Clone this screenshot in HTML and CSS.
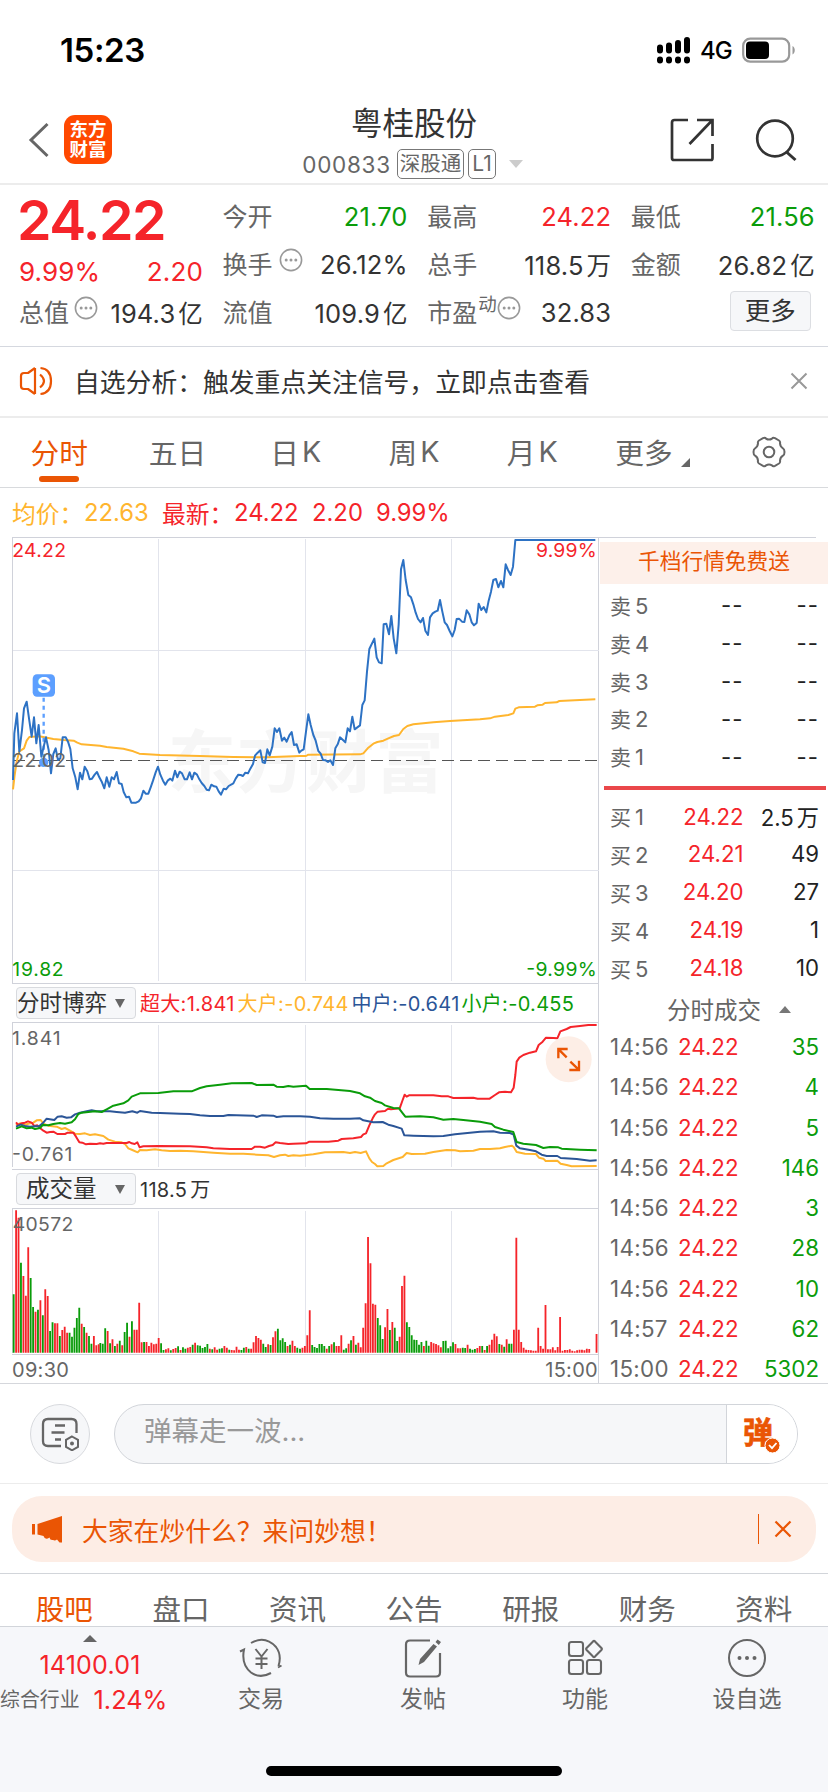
FILE: index.html
```html
<!DOCTYPE html>
<html lang="zh-CN">
<head>
<meta charset="utf-8">
<title>粤桂股份 000833</title>
<link rel="stylesheet" href="styles.css">
</head>
<body>
<svg width="0" height="0" class="defs">
  <symbol id="dots" viewBox="0 0 24 24"><circle cx="12" cy="12" r="10.6" fill="none" stroke="#999" stroke-width="1.6"/><circle cx="7.2" cy="12" r="1.5" fill="#999"/><circle cx="12" cy="12" r="1.5" fill="#999"/><circle cx="16.8" cy="12" r="1.5" fill="#999"/></symbol>
</svg>
<div class="status">
  <span class="clock">15:23</span>
  <svg class="signal" width="36" height="28" viewBox="0 0 36 28">
    <g stroke="#000" stroke-width="6" stroke-linecap="round"><path d="M4 11.5v3M13 9.5v5M22 7v7.500M31 4v10.500M4 23.500v1M13 23.500v1M22 23.500v1M31 23.500v1"/></g>
  </svg>
  <span class="net">4G</span>
  <svg class="battery" width="54" height="27" viewBox="0 0 54 27"><rect x="1.200" y="1.700" width="46" height="23" rx="7" fill="none" stroke="#999" stroke-width="2.200"/><rect x="4" y="4.500" width="23" height="17.500" rx="4" fill="#000"/><path d="M50.500 9c3 1.500 3 7 0 8.500z" fill="#999"/></svg>
</div>
<header class="head">
  <div class="head-left">
    <svg width="22" height="36" viewBox="0 0 22 36"><path d="M19.500 2 3 18l16.500 16" fill="none" stroke="#666" stroke-width="3"/></svg>
    <div class="logo"><span>东方</span><span>财富</span></div>
  </div>
  <div class="head-mid">
    <div class="name">粤桂股份</div>
    <div class="code"><span class="code-num">000833</span><span class="tag">深股通</span><span class="tag tag-l">L1</span><i class="caret"></i></div>
  </div>
  <div class="head-right">
    <svg width="44" height="44" viewBox="0 0 44 44"><path d="M18 2H4.500Q2 2 2 4.500V40q0 2 2 2h37q1.500 0 1.500-2V26M27 2h15.500v16M42 2.500 19.500 26" fill="none" stroke="#333" stroke-width="2.700"/></svg>
    <svg width="44" height="44" viewBox="0 0 44 44"><circle cx="20" cy="20.500" r="17.800" fill="none" stroke="#333" stroke-width="2.700"/><path d="m31.500 34 9 8" stroke="#333" stroke-width="3"/></svg>
  </div>
</header>
<section class="quote">
  <div class="col first">
    <div class="price">24.22</div>
    <div class="row red chg"><span>9.99%</span><span>2.20</span></div>
    <div class="row"><label>总值<svg class="tip"><use href="#dots"/></svg></label><span>194.3<u>亿</u></span></div>
  </div>
  <div class="col">
    <div class="row"><label>今开</label><span class="green">21.70</span></div>
    <div class="row"><label>换手<svg class="tip gap"><use href="#dots"/></svg></label><span>26.12%</span></div>
    <div class="row"><label>流值</label><span>109.9<u>亿</u></span></div>
  </div>
  <div class="col">
    <div class="row"><label>最高</label><span class="red">24.22</span></div>
    <div class="row"><label>总手</label><span>118.5<u>万</u></span></div>
    <div class="row"><label>市盈<sup>动</sup><svg class="tip tight"><use href="#dots"/></svg></label><span>32.83</span></div>
  </div>
  <div class="col">
    <div class="row"><label>最低</label><span class="green">21.56</span></div>
    <div class="row"><label>金额</label><span>26.82<u>亿</u></span></div>
    <div class="row end"><b class="more">更多</b></div>
  </div>
</section>
<section class="notice">
  <svg width="36" height="32" viewBox="0 0 36 32"><path d="M16 3v26M16 3 9 8H5Q2 8 2 11v10q0 3 3 3h4l7 5" fill="none" stroke="#ea5504" stroke-width="2.200" stroke-linejoin="round"/><path d="M21 9.500q8 6.500 0 13M21.500 3q10.500 1 10.500 13t-10.500 13" fill="none" stroke="#ea5504" stroke-width="2.200"/></svg>
  <p>自选分析：触发重点关注信号，立即点击查看</p>
  <svg width="18" height="18" viewBox="0 0 18 18"><path d="m1.500 1.500 15 15m0-15-15 15" stroke="#999" stroke-width="2"/></svg>
</section>
<nav class="tabs">
  <span class="on">分时</span><span>五日</span><span>日<i>K</i></span><span>周<i>K</i></span><span>月<i>K</i></span><span class="t-more">更多<svg width="9" height="9"><path d="M9 0v9H0z" fill="#666"/></svg></span>
  <span><svg width="34" height="32" viewBox="0 0 34 32"><path d="M11 2.200q2-1 3 .4 3 2 6 0 1-1.400 3-.4l4 2.300q1.500 1 1 2.800.2 3.500 3 5Q32.500 13 32.500 16t-1.500 3.700q-2.800 1.500-3 5 .5 1.800-1 2.800l-4 2.300q-2 1-3-.4-3-2-6 0-1 1.400-3 .4l-4-2.300q-1.500-1-1-2.800-.2-3.500-3-5Q1.500 19 1.500 16T3 12.300q2.800-1.500 3-5-.5-1.800 1-2.800z" fill="none" stroke="#666" stroke-width="2"/><circle cx="17" cy="16" r="5.300" fill="none" stroke="#666" stroke-width="2"/></svg></span>
</nav>
<div class="avg"><span class="amber a1">均价：</span><span class="amber a2">22.63</span><span class="red a3">最新：</span><span class="red a4">24.22</span><span class="red a5">2.20</span><span class="red">9.99%</span></div>
<main class="board">
  <div class="charts">
    <svg class="c-price" width="587" height="447" viewBox="36 21 1761 1341">
      <text class="mark" x="503" y="772" textLength="828">东方财富</text>
      <path class="grid" d="M475.500 27V1353M916.500 27V1353M1354.500 27V1353M38 361H1797M38 1021H1797"/>
      <path class="frame" d="M37.500 22V1360.500H1797"/>
      <path class="mid" d="M38 691.500H1797" stroke="#555" stroke-width="3" stroke-dasharray="36 17.700"/>
      <polyline class="ln" stroke="#ffb52e" points="39,778 44,735 50,695 58,664 72,655 80,632 88,621 118,619 160,627 192,630 221,632 232,638 245,643 300,647 320,651 370,656 400,664 418,671 480,675 600,678 700,681 800,682 900,678 918,678 925,674 1080,673 1090,670 1105,653 1120,641 1132,636 1150,632 1165,625 1182,618 1197,615 1210,597 1222,588 1240,583 1300,577 1350,573 1440,568 1470,565 1485,560 1525,555 1540,550 1546,536 1556,532 1605,530 1612,526 1628,524 1635,519 1670,517 1678,513 1786,508"/>
      <path d="M131 503V690" stroke="#5c9fff" stroke-width="7" stroke-dasharray="12 12"/><circle cx="131" cy="697" r="14" fill="#5c9fff"/>
      <polyline class="ln" stroke="#2d72c4" points="39,750 43,610 51,550 58,665 66,600 72,535 80,515 87,565 95,620 102,562 109,640 116,585 124,680 131,650 138,622 146,660 153,730 160,672 167,655 174,690 181,685 188,622 197,622 204,635 211,657 218,715 226,742 233,778 240,728 247,748 254,710 262,724 269,748 276,746 284,734 291,726 298,742 306,757 313,775 320,742 328,770 335,742 342,748 350,726 357,760 365,762 371,786 379,802 387,800 394,818 408,818 416,814 423,805 430,782 437,791 445,791 452,772 459,752 467,727 474,710 481,734 489,752 496,764 503,752 511,746 517,752 525,722 532,742 539,725 546,730 554,748 561,748 569,727 576,748 583,728 591,734 598,748 605,759 613,768 620,779 627,781 634,764 642,769 649,770 656,784 663,794 671,776 678,778 686,768 700,760 707,746 715,734 722,735 729,738 736,728 744,730 751,716 759,702 765,677 773,668 781,661 788,697 795,699 802,658 809,676 817,650 824,595 831,606 838,595 846,632 853,623 860,635 868,616 875,606 882,645 890,643 898,668 904,662 911,658 918,605 925,553 932,585 940,615 947,632 955,663 962,671 969,690 977,691 984,696 991,691 999,705 1006,655 1013,643 1020,622 1036,637 1043,595 1050,604 1057,560 1064,598 1072,592 1080,586 1087,525 1094,511 1101,425 1108,357 1123,326 1130,382 1137,397 1145,400 1151,283 1159,281 1167,313 1174,258 1181,325 1189,370 1196,283 1203,118 1210,90 1217,150 1225,195 1233,202 1240,223 1247,248 1254,267 1262,277 1269,264 1276,302 1284,315 1290,262 1298,250 1306,245 1313,242 1320,210 1327,245 1334,277 1341,285 1349,303 1357,319 1364,300 1370,267 1377,266 1386,275 1393,276 1400,241 1408,253 1415,277 1422,286 1430,279 1436,221 1444,240 1451,231 1459,247 1466,212 1473,185 1480,150 1488,147 1495,172 1503,153 1510,172 1517,103 1524,120 1532,135 1539,110 1546,30 1786,30"/>
      <rect x="98" y="433" width="67" height="67" rx="13" fill="#5c9fff"/><text x="131.500" y="490" class="s">S</text>
      <text class="ax" x="37" y="81" textLength="161" fill="#f5242a">24.22</text>
      <text class="ax" x="37" y="711" textLength="161" fill="#666">22.02</text>
      <text class="ax" x="37" y="1338" textLength="154" fill="#0a9c0a">19.82</text>
      <text class="ax" x="1608" y="81" textLength="182" fill="#f5242a">9.99%</text>
      <text class="ax" x="1579" y="1338" textLength="211" fill="#0a9c0a">-9.99%</text>
    </svg>
    <div class="bar">
      <div class="pick"><span>分时博弈</span><svg width="10" height="9"><path d="M0 0h10L5 9z" fill="#666"/></svg></div>
      <span class="lg red l1">超大:1.841</span><span class="lg amber l2">大户:-0.744</span><span class="lg navy l3">中户:-0.641</span><span class="lg green">小户:-0.455</span>
    </div>
    <div class="flow">
    <svg width="587" height="148" viewBox="36 126 1761 444">
      <path class="grid" d="M475.500 135V560M916.500 135V560M1354.500 135V560"/>
      <path class="frame" d="M1797 127.500H37.500V560M36 568.500H1797"/>
      <polyline class="ln" stroke="#ffb52e" points="48,435 60,430 75,434 90,430 100,428 110,421 122,420 130,431 145,437 170,440 185,447 195,444 210,452 225,461 240,462 255,460 270,465 285,463 310,468 325,479 345,485 365,487 375,492 385,505 397,510 413,517 420,510 440,511 465,508 485,511 510,513 540,512 580,514 610,516 640,518 690,521 730,521 770,524 805,526 822,531 840,526 855,524 865,528 880,526 900,527 940,523 975,517 1030,516 1050,519 1065,516 1082,519 1098,514 1108,535 1116,546 1125,552 1132,559 1150,558 1160,550 1180,540 1208,531 1220,519 1235,522 1275,521 1300,516 1340,510 1365,511 1380,514 1420,512 1440,507 1470,507 1500,505 1515,501 1535,497 1541,501 1550,516 1575,521 1608,522 1617,533 1630,536 1637,543 1672,542 1682,551 1700,555 1715,559 1790,558"/>
      <polyline class="ln" stroke="#f5242a" points="48,427 55,435 65,430 75,428 84,424 95,428 103,438 112,436 120,444 130,452 140,458 150,456 160,455 172,462 195,462 203,458 220,458 228,470 238,487 247,488 258,493 270,491 290,492 300,490 310,491 320,489 380,489 388,486 395,490 404,492 412,487 419,502 430,499 475,498 570,499 620,502 640,505 690,507 755,507 765,500 780,500 795,503 807,498 818,495 827,487 840,489 865,492 880,491 918,490 928,485 985,485 1015,482 1025,477 1060,475 1083,471 1090,463 1098,460 1108,436 1118,415 1125,403 1133,395 1155,393 1164,386 1173,388 1199,385 1208,360 1214,344 1220,350 1227,346 1300,346 1325,349 1345,349 1360,354 1420,353 1433,356 1469,356 1485,345 1497,337 1515,335 1533,337 1541,323 1546,285 1550,245 1558,233 1570,225 1590,218 1608,214 1616,195 1628,185 1638,173 1660,174 1672,175 1681,154 1700,147 1712,141 1740,138 1765,135 1790,135"/>
      <polyline class="ln" stroke="#2b5597" points="48,440 62,434 75,438 90,440 105,439 118,438 128,430 140,416 163,420 173,410 185,409 200,413 213,412 225,403 240,398 260,394 275,391 290,394 330,394 350,396 375,398 397,394 412,398 420,393 455,398 480,399 540,401 570,402 600,406 630,408 670,408 685,405 760,407 770,411 785,406 820,407 830,411 850,409 900,409 930,410 960,415 1000,416 1050,416 1080,415 1090,421 1120,427 1148,426 1165,434 1180,438 1205,446 1213,466 1240,467 1300,469 1330,468 1365,463 1380,461 1440,455 1480,454 1500,458 1530,459 1541,464 1549,497 1560,505 1590,510 1608,514 1625,524 1640,528 1672,528 1682,534 1730,537 1770,542 1790,541"/>
      <polyline class="ln" stroke="#0a9c0a" points="48,446 65,439 80,445 95,443 105,447 120,444 128,435 145,436 160,432 180,429 195,431 215,427 225,418 235,402 245,398 285,394 305,396 320,388 340,377 370,370 385,361 395,350 420,340 475,339 520,334 575,334 600,324 620,319 660,314 695,310 755,309 770,315 820,314 830,320 850,321 865,318 880,320 918,317 929,327 980,327 1050,333 1080,340 1095,349 1110,353 1125,363 1145,369 1155,376 1180,384 1197,385 1206,397 1216,410 1260,409 1300,412 1330,419 1360,417 1390,420 1440,425 1475,432 1485,441 1510,449 1540,456 1550,486 1570,491 1608,495 1630,504 1650,501 1675,502 1685,506 1740,509 1790,511"/>
      <text class="ax" x="36" y="195" textLength="146" fill="#666">1.841</text>
      <text class="ax" x="36" y="543" textLength="181" fill="#666">-0.761</text>
      <circle cx="1706" cy="238" r="69" fill="#fdeee6"/>
      <path d="M1675 235V207H1703M1676 208 1700 232M1737 242V270H1708M1736 269 1711 245" fill="none" stroke="#ea5504" stroke-width="7"/>
    </svg>
    </div>
    <div class="bar">
      <div class="pick vol"><span>成交量</span><svg width="10" height="9"><path d="M0 0h10L5 9z" fill="#666"/></svg></div>
      <span class="lg dark">118.5<u>万</u></span>
    </div>
    <svg width="587" height="148" viewBox="36 684 1761 444">
      <path class="grid" d="M475.500 692V1118M916.500 692V1118M1354.500 692V1118"/>
      <path class="frame" d="M1797 685.500H37.500V1118M36 1123H1797"/>
      <path id="down" class="vb" stroke="#0a9c0a"/><path id="up" class="vb" stroke="#f5242a"/>
      <text class="ax" x="38" y="752" textLength="182" fill="#666">40572</text>
    </svg>
    <div class="times"><span>09:30</span><span>15:00</span></div>
  </div>
  <aside class="side">
    <div class="promo">千档行情免费送</div>
    <div class="lv">
      <div><span>卖<i>5</i></span><span class="none">--</span><span class="none">--</span></div>
      <div><span>卖<i>4</i></span><span class="none">--</span><span class="none">--</span></div>
      <div><span>卖<i>3</i></span><span class="none">--</span><span class="none">--</span></div>
      <div><span>卖<i>2</i></span><span class="none">--</span><span class="none">--</span></div>
      <div><span>卖<i>1</i></span><span class="none">--</span><span class="none">--</span></div>
    </div>
    <div class="split"></div>
    <div class="lv buy">
      <div><span>买<i>1</i></span><span>24.22</span><span>2.5<u>万</u></span></div>
      <div><span>买<i>2</i></span><span>24.21</span><span>49</span></div>
      <div><span>买<i>3</i></span><span>24.20</span><span>27</span></div>
      <div><span>买<i>4</i></span><span>24.19</span><span>1</span></div>
      <div><span>买<i>5</i></span><span>24.18</span><span>10</span></div>
    </div>
    <div class="deal-h">分时成交<svg width="12" height="7"><path d="M0 7h12L6 0z" fill="#777"/></svg></div>
    <div class="deals">
      <div><span>14:56</span><span>24.22</span><span>35</span></div>
      <div><span>14:56</span><span>24.22</span><span>4</span></div>
      <div><span>14:56</span><span>24.22</span><span>5</span></div>
      <div><span>14:56</span><span>24.22</span><span>146</span></div>
      <div><span>14:56</span><span>24.22</span><span>3</span></div>
      <div><span>14:56</span><span>24.22</span><span>28</span></div>
      <div><span>14:56</span><span>24.22</span><span>10</span></div>
      <div><span>14:57</span><span>24.22</span><span>62</span></div>
      <div><span>15:00</span><span>24.22</span><span>5302</span></div>
    </div>
  </aside>
</main>
<section class="chat">
  <div class="round"><svg width="38" height="34" viewBox="0 0 38 34"><path d="M20 29H7q-5 0-5-5V7q0-5 5-5h23.500q5 0 5 5v9M14 8.500h10M10.500 15.500h13M14 22.500h6" fill="none" stroke="#666" stroke-width="2.300"/><path d="m31 19.500 6 3.400v7l-6 3.400-6-3.400v-7z" fill="none" stroke="#666" stroke-width="2"/><circle cx="31" cy="26.400" r="2" fill="#666"/></svg></div>
  <div class="field"><span>弹幕走一波...</span><div class="dan"><b>弹</b><svg width="17" height="17" viewBox="-1 -1 17 17"><circle cx="7.500" cy="7.500" r="7.500" fill="#ea5504" stroke="#fff" stroke-width="1"/><path d="m4 7 3 3.200L11.500 5" fill="none" stroke="#fff" stroke-width="1.800"/></svg></div></div>
</section>
<section class="ask"><div class="ask-in">
  <svg width="31" height="27" viewBox="0 0 31 27"><path d="M0 8h3v10.500H0zM5.500 8 30 0v26.500h-2.500L25 23.500q-2 1.500-4 .5-3 .5-3.500-2.500Q13 24.500 11.500 20l-6-1.500z" fill="#ea5504"/></svg>
  <p>大家在炒什么？来问妙想！</p>
  <i></i>
  <svg width="18" height="18" viewBox="0 0 18 18"><path d="m1.500 1.500 15 15m0-15-15 15" stroke="#ea5504" stroke-width="2.200"/></svg>
</div></section>
<nav class="cats"><span class="on">股吧</span><span>盘口</span><span>资讯</span><span>公告</span><span>研报</span><span>财务</span><span>资料</span></nav>
<footer class="foot">
  <div class="index">
    <svg width="14" height="7"><path d="M0 7h14L7 0z" fill="#666"/></svg>
    <div class="red idx">14100.01</div>
    <div class="ind"><span>综合行业</span><b class="red">1.24%</b></div>
  </div>
  <div class="act"><svg width="46" height="40" viewBox="0 0 46 40"><path d="M13 5q14-8 25 4 6 8 2.500 19M33 35q-11 6-20-.5-10-8-7-23L2 13.500M40 29.500l3.500-2" fill="none" stroke="#666" stroke-width="2"/><path d="m17.500 11 6 7.500 6-7.500M23.500 18v13M17.500 20.500h12M17.500 26h12" fill="none" stroke="#666" stroke-width="2"/></svg><span>交易</span></div>
  <div class="act"><svg width="38" height="40" viewBox="0 0 38 40"><path d="M26 2.500H6Q2 2.500 2 6.500v28q0 4 4 4h26q4 0 4-4V15" fill="none" stroke="#666" stroke-width="2.200"/><path d="M29.500 6 33 8.500 20 24l-5.500 3 1.500-6zM31.500 4 33.500 1.500l3.500 2.500-2.200 3z" fill="#666"/></svg><span>发帖</span></div>
  <div class="act"><svg width="36" height="40" viewBox="0 0 36 40"><g fill="none" stroke="#666" stroke-width="2.100"><rect x="2" y="4" width="14" height="14" rx="2.500"/><rect x="2" y="22" width="14" height="14" rx="2.500"/><rect x="20" y="22" width="14" height="14" rx="2.500"/><path d="M26 3.400q1-.9 2 0l6.400 6.600q.9 1 0 2L28 18.600q-1 .9-2 0L19.600 12q-.9-1 0-2z"/></g></svg><span>功能</span></div>
  <div class="act"><svg width="40" height="40" viewBox="0 0 40 40"><circle cx="20" cy="20" r="18" fill="none" stroke="#666" stroke-width="2"/><g fill="#666"><circle cx="12.500" cy="20" r="2"/><circle cx="20" cy="20" r="2"/><circle cx="27.500" cy="20" r="2"/></g></svg><span>设自选</span></div>
  <div class="home"></div>
</footer>
<script src="volume.js"></script>
</body>
</html>
```
FILE: volume.js
```js
// Per-minute volume: [x of the first bar, bars], a negative value is a falling minute
const step = 7.29;
const runs = [
  [41, [-175,427,405,-270,230,171,316,-224,-137,123,-129,157,-112,190,170,-65,-91,88,88,-50,68,78,60,-60,-48,-75,-104,-135,87,-77,60,-50,-27,50,22,25]],
  [301, [-29,-27,-73,65,-28,40,-20,27,-36,22,-62,-90,48,-94,69,69,150,31,-32,32,20,30,25,27,44,-28,-8,10,13,-7,11,14,-19,8,-16,-12,15,17,-24,30]],
  [593, [-22,-21,-14,-17,-26,12,-10,16,9,-12,-13,20,15,-9,8,7,18,9,-8,-15,17,-12,12,31,50,44,39,-27,-17,25,-23,46,64,-72,-37,-43,-32,20,-24,36,20,-15]],
  [900, [-12,15,20,52,127,-23,-17,-14,-26,-26,-20,12,-20,25,-31,20,20,52,-9,-13,27,-37,50,-24,30,16,75,148,347,268,147,144,-104,-82,-41,76,131,-68,92,-75,-35,48]],
  [1206, [200,231,-91,-77,-52,-39,-38,-24,-32,20,-36,-21,32,28,26,22,16,-35,-36,-13,-19,-31,26,13,13,-15,-14,24,-12,-9,-11,14,20,-20,8,-20,24,39,57,49]],
  [1498, [-26,24,-18,40,-27,-27,69,345,69,32,15,9,8,7,6,6,75,20,12,143,10,10,16,7,17,107,6,8,8,10,6,4,7,9,9,7,12,11,0,0,56]]
];
let up = "", down = "";
for (const [x0, bars] of runs) {
  bars.forEach((v, i) => {
    if (!v) return;
    const seg = `M${(x0 + i * step).toFixed(1)} 1118v${-Math.abs(v)}`;
    if (v > 0) up += seg; else down += seg;
  });
}
document.getElementById("up").setAttribute("d", up);
document.getElementById("down").setAttribute("d", down);
```
FILE: styles.css
```css
* { box-sizing: border-box; }
body { margin: 0; width: 828px; height: 1792px; overflow: hidden; background: #fff; color: #333; font-family: Inter, "Noto Sans CJK SC", sans-serif; font-size: 26px; display: flex; flex-direction: column; }
p { margin: 0; }
i { font-style: normal; }
u { text-decoration: none; margin-left: 3px; }
svg { display: block; flex: none; }
.defs { display: none; }
.red { color: #f5242a; }
.green { color: #0a9c0a; }
.amber { color: #ffb52e; }
.navy { color: #2b5597; }
.dark { color: #333; }

.status { height: 96px; flex: none; display: flex; align-items: center; padding: 4px 32px 0 60px; color: #000; }
.clock { font-size: 33px; font-weight: 600; flex: 1; letter-spacing: -.4px; }
.net { font-size: 24px; font-weight: 500; margin: 0 10px 0 8px; letter-spacing: -.8px; }

.head { height: 89px; flex: none; border-bottom: 2px solid #ececec; display: grid; grid-template-columns: 250px 1fr 250px; }
.head-left { display: flex; align-items: center; padding: 0 0 0 28px; gap: 14px; }
.logo { width: 48px; height: 49px; border-radius: 11px; background: #ff4800; color: #fff; font-weight: 700; font-size: 18.500px; line-height: 20px; padding-bottom: 2px; display: flex; flex-direction: column; align-items: center; justify-content: center; }
.head-mid { display: flex; flex-direction: column; align-items: center; }
.name { font-size: 31.500px; line-height: 44px; padding-top: 6px; }
.code { display: flex; align-items: center; height: 32px; margin-top: 2px; padding-right: 3px; color: #666; }
.code-num { font-size: 22.500px; letter-spacing: .7px; margin-right: 6px; }
.tag { border: 1.500px solid #777; border-radius: 5px; height: 30px; line-height: 27px; font-size: 20.500px; padding: 0 2px; margin-right: 4px; }
.tag-l { padding: 0 3px; font-size: 21px; }
.caret { border: 7px solid transparent; border-top: 8px solid #ccc; border-bottom: 0; margin-left: 9px; }
.head-right { display: flex; align-items: center; justify-content: flex-end; gap: 41px; padding: 0 29px 0 0; }

.quote { height: 162px; flex: none; border-bottom: 1.500px solid #d5d8df; display: grid; grid-template-columns: 184px 185px 184px 184px; column-gap: 19.600px; padding: 7px 0 0 19px; }
.col { display: flex; flex-direction: column; }
.row { height: 48px; display: flex; align-items: center; justify-content: space-between; font-size: 25.500px; letter-spacing: .15px; }
.row u { font-size: 24.500px; }
.row label { display: flex; align-items: center; color: #666; font-size: 25px; letter-spacing: 0; margin-top: -2px; }
.row sup { font-size: 18.500px; line-height: 20px; margin: -14px 0 0 1px; }
.tip { width: 24px; height: 24px; margin: -7px 0 0 5px; }
.tip.gap { margin-left: 6px; }
.tip.tight { margin-left: 0; }
.price { height: 54px; line-height: 56px; font-size: 55.500px; font-weight: 600; letter-spacing: -1.500px; margin-left: -2px; color: #f5242a; }
.first .chg { height: 42px; padding-top: 8px; font-size: 26px; }
.end { justify-content: flex-end; }
.more { width: 81px; height: 40px; border: 1.500px solid #dcdee2; border-radius: 4px; background: #f6f7f9; font-weight: 400; text-align: center; line-height: 38px; margin-right: 4px; margin-top: -2px; }

.notice { height: 71px; flex: none; border-bottom: 2px solid #ececec; display: flex; align-items: center; padding: 0 20px 2px 19px; }
.notice p { flex: 1; margin-left: 19px; font-size: 25.800px; }

.tabs { height: 70px; flex: none; border-bottom: 1.500px solid #d8dadd; display: flex; align-items: center; color: #666; font-size: 28.700px; }
.tabs span { width: 118.400px; height: 69px; padding-bottom: 2px; display: flex; align-items: center; justify-content: center; position: relative; }
.tabs i { margin-left: 3px; }
.tabs .t-more { padding-left: 4px; }
.t-more svg { margin: 22px 0 0 8px; }
.on { color: #ea5504; }
.tabs .on::after { content: ""; position: absolute; left: 39px; bottom: 5px; width: 40px; height: 6px; border-radius: 3px; background: #ea5504; }

.avg { height: 49px; flex: none; display: flex; align-items: center; padding-left: 12px; font-size: 23.800px; }
.avg span { white-space: nowrap; }
.a1, .a3 { width: 72px; }
.a2 { width: 78px; }
.a4 { width: 78px; }
.a5 { width: 64px; }

.board { height: 847px; flex: none; border-bottom: 1.500px solid #d5d7dc; display: flex; position: relative; }
.board::before { content: ""; position: absolute; left: 12px; top: 0; width: 804px; height: 1px; background: #d0d2da; }
.charts { width: 599px; padding-left: 12px; border-right: 1px solid #d0d2da; display: flex; flex-direction: column; flex: none; }
.grid { stroke: #e2e4ec; stroke-width: 3; shape-rendering: crispEdges; }
.mid { shape-rendering: crispEdges; }
.frame { fill: none; stroke: #d0d2da; stroke-width: 3; shape-rendering: crispEdges; }
.ln { fill: none; stroke-width: 6; stroke-linejoin: round; }
.ax { font-size: 58px; }
.mark { font-size: 205px; font-weight: 700; fill: #f6f6f6; }
.s { font-size: 66px; font-weight: 600; fill: #fff; text-anchor: middle; }
.vb { stroke-width: 5.500; fill: none; }
.bar { height: 38px; flex: none; display: flex; align-items: center; padding-left: 4px; font-size: 20px; white-space: nowrap; }
.pick { width: 120px; height: 32px; border: 1.500px solid #d8dade; border-radius: 4px; background: #f6f7f9; display: flex; align-items: center; justify-content: space-between; padding: 0 10px 0 0; font-size: 22.500px; margin-right: 4px; line-height: 30px; }
.vol { padding-left: 9px; font-size: 23.500px; }
.lg { letter-spacing: .3px; margin-top: -1px; }
.lg.l1 { width: 97.500px; }
.l2 { width: 114px; }
.l3 { width: 110px; }
.times { display: flex; justify-content: space-between; color: #666; font-size: 20px; letter-spacing: .3px; line-height: 29px; }

.side { flex: 1; padding-top: 5px; }
.promo { height: 42px; margin-left: 1px; background: #fdf0ea; color: #ea5504; text-align: center; line-height: 39px; font-size: 21.700px; }
.lv { padding-top: 2px; font-size: 22.200px; }
.lv div { height: 37.850px; display: grid; grid-template-columns: 56px 77.500px 75.500px; padding-left: 11px; align-items: center; }
.lv span, .deals span { text-align: right; color: #222; white-space: nowrap; }
.lv span:first-child, .deals span:first-child { text-align: left; color: #666; }
.lv span:first-child { font-size: 21px; }
.lv span i { font-size: 22px; margin-left: 4px; }
.lv .none { letter-spacing: 1px; }
.split { height: 4px; margin: 11px 2px 0 5px; background: #ea474a; }
.buy { padding-top: 7px; }
.buy span:nth-child(2), .deals span:nth-child(2) { color: #f5242a; }
.deal-h { height: 40px; display: flex; align-items: center; color: #666; font-size: 23.500px; padding: 6px 0 0 68px; }
.deal-h svg { margin-left: 18px; }
.deals { font-size: 22.300px; }
.deals div { height: 40.280px; display: grid; grid-template-columns: 68px 60px 81px; padding-left: 11px; align-items: center; }
.deals span:nth-child(1) { letter-spacing: .35px; }
.deals span:nth-child(2) { text-align: left; }
.deals span:nth-child(3) { color: #0a9c0a; }

.chat { height: 100px; flex: none; border-bottom: 1.500px solid #ececec; padding: 20px 30px 0; display: flex; gap: 24px; }
.round { width: 60px; height: 60px; border: 1.500px solid #d8dade; border-radius: 50%; background: #f6f7f9; display: flex; align-items: center; justify-content: center; }
.field { flex: 1; height: 60px; border: 1.500px solid #d2d5da; border-radius: 30px; background: #f6f7f9; overflow: hidden; display: flex; justify-content: space-between; color: #999; font-size: 27.500px; line-height: 53px; padding-left: 29px; }
.dan { width: 71px; background: #fff; border-left: 1.500px solid #d2d5da; position: relative; color: #ea5504; }
.dan b { display: block; font-size: 30px; font-weight: 700; line-height: 55px; margin-left: 16px; -webkit-text-stroke: .7px #ea5504; }
.dan svg { position: absolute; left: 37px; top: 32px; }

.ask { height: 90px; flex: none; border-bottom: 1.500px solid #d2d5da; padding: 12px 12px 0; }
.ask-in { height: 66px; border-radius: 30px; background: #fdede5; color: #ea5504; display: flex; align-items: center; padding: 0 24px 0 20px; font-size: 25.800px; }
.ask-in p { flex: 1; margin-left: 19px; padding-top: 1px; }
.ask-in i { width: 1.500px; height: 30px; background: #ea5504; margin-right: 15px; }

.cats { height: 52px; flex: none; display: flex; color: #666; font-size: 28.500px; line-height: 72px; padding-left: 6px; overflow: hidden; }
.cats span { width: 116.600px; text-align: center; }
.foot { flex: 1; border-top: 1.500px solid #d2d5da; background: #f6f7fa; display: flex; position: relative; color: #666; }
.index { width: 180px; display: flex; flex-direction: column; align-items: center; padding-top: 8px; }
.idx { font-size: 25px; line-height: 30px; margin-top: 8px; letter-spacing: .2px; }
.ind { display: flex; align-self: flex-start; align-items: center; gap: 14px; font-size: 19.900px; line-height: 30px; margin-top: 5px; white-space: nowrap; }
.ind b { font-weight: 400; font-size: 25.300px; }
.act { width: 162px; display: flex; flex-direction: column; align-items: center; padding-top: 11px; font-size: 23px; line-height: 30px; }
.act span { margin-top: 6px; }
.home { position: absolute; left: 266px; top: 139px; width: 296px; height: 10px; border-radius: 5px; background: #000; }
```
